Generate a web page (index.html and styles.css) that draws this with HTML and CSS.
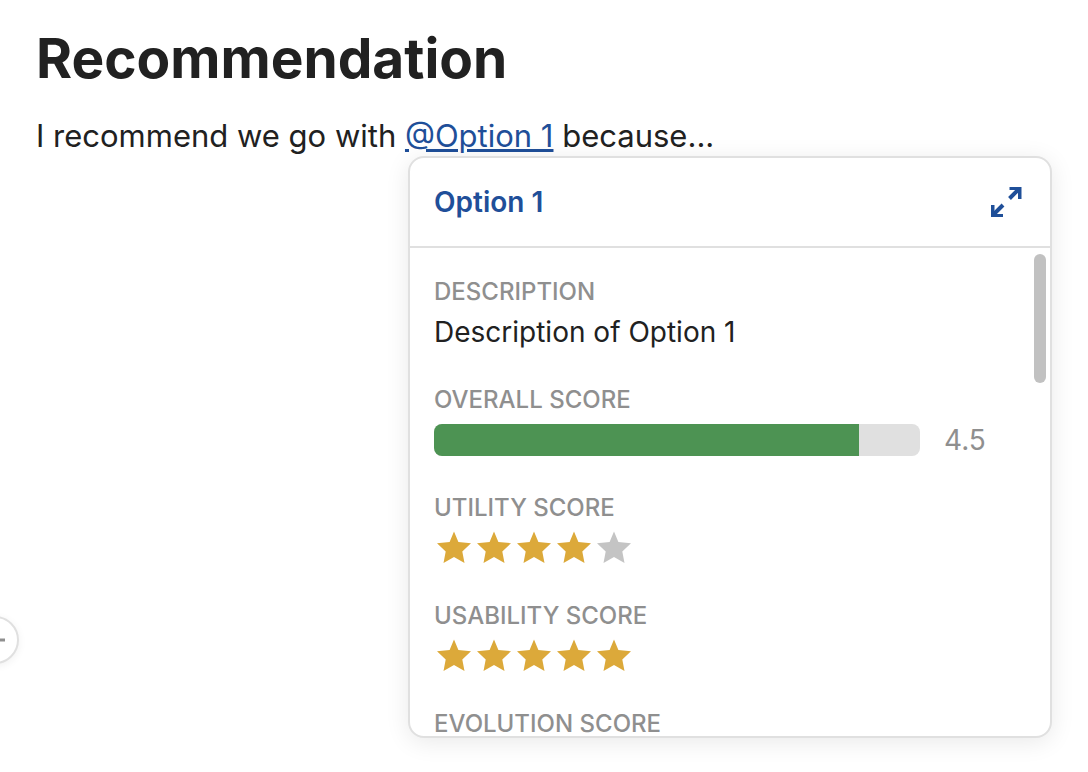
FILE: index.html
```html
<!DOCTYPE html>
<html lang="en">
<head>
<meta charset="utf-8">
<title>Recommendation</title>
<link rel="stylesheet" href="styles.css">
</head>
<body>
<svg class="symbols" aria-hidden="true">
  <symbol id="star" viewBox="0 0 40 40"><path d="M20 3.5L24.4 14 37 15.2 28.3 23.5 30.5 35 20 29 9.5 35 11.7 23.5 3 15.2 15.6 14z"/></symbol>
</svg>
<main class="document">
  <h1 class="title">Recommendation</h1>
  <p class="paragraph">I recommend we go with <a class="mention-link" href="#option-1">@Option 1</a> because...</p>
  <section class="card" id="option-1" aria-labelledby="card-title">
    <header class="card-header">
      <h2 class="card-title" id="card-title">Option 1</h2>
      <button class="expand" type="button" aria-label="Expand">
        <svg class="expand-icon" viewBox="0 0 32 32" aria-hidden="true"><path class="arrow" d="M19.5 12.5L29 3M13 19L3 29"/><path d="M19.5 1H31.5V13H28V4H19.5zM1 19H4.500V28H13V31H1z"/></svg>
      </button>
    </header>
    <div class="card-body">
      <dl class="fields">
        <div class="field"><dt class="label">DESCRIPTION</dt><dd class="value">Description of Option 1</dd></div>
        <div class="field"><dt class="label">OVERALL SCORE</dt><dd class="value score"><span class="track"><span class="fill"></span></span><span class="score-number">4.5</span></dd></div>
        <div class="field"><dt class="label">UTILITY SCORE</dt><dd class="value stars" aria-label="4 of 5">
          <svg class="star"><use href="#star"/></svg><svg class="star"><use href="#star"/></svg><svg class="star"><use href="#star"/></svg><svg class="star"><use href="#star"/></svg><svg class="star star-off"><use href="#star"/></svg></dd></div>
        <div class="field"><dt class="label">USABILITY SCORE</dt><dd class="value stars" aria-label="5 of 5">
          <svg class="star"><use href="#star"/></svg><svg class="star"><use href="#star"/></svg><svg class="star"><use href="#star"/></svg><svg class="star"><use href="#star"/></svg><svg class="star"><use href="#star"/></svg></dd></div>
        <div class="field"><dt class="label">EVOLUTION SCORE</dt></div>
      </dl>
      <span class="scroll-thumb"></span>
    </div>
  </section>
</main>
<button class="add" type="button" aria-label="Add"><svg class="add-icon" viewBox="0 0 20 20" aria-hidden="true"><path d="M0 10H20M10 0V20"/></svg></button>
</body>
</html>
```
FILE: styles.css
```css
* { box-sizing: border-box; }
body {
  margin: 0;
  background: #fff;
  color: #212121;
  font-family: Inter, "Liberation Sans", sans-serif;
}
.symbols { display: none; }
.document { position: relative; min-height: 100vh; padding: 24px 36px; }
.title { margin: 0 0 24px; font-size: 55px; line-height: 68px; font-weight: 700; }
.paragraph { margin: 0; font-size: 31px; line-height: 40px; }
.mention-link {
  color: #1f4f99;
  text-decoration-thickness: 3px;
  text-underline-offset: 2px;
}
.card {
  position: absolute;
  top: 156px;
  left: 408px;
  display: flex;
  flex-direction: column;
  width: 644px;
  max-height: 582px;
  overflow: hidden;
  background: #fff;
  border: 2px solid #e0e0e0;
  border-radius: 16px;
  box-shadow: 0 4px 24px rgba(0, 0, 0, 0.09);
}
.card-header {
  display: flex;
  flex: none;
  align-items: center;
  justify-content: space-between;
  padding: 24px;
  border-bottom: 2px solid #e0e0e0;
}
.card-title { margin: 0; font-size: 28px; line-height: 40px; font-weight: 600; color: #1f4f99; }
.expand { display: flex; padding: 4px; border: 0; background: none; color: #1f4f99; }
.expand-icon { width: 32px; height: 32px; fill: currentColor; }
.arrow { fill: none; stroke: currentColor; stroke-width: 4; }
.card-body { position: relative; overflow: hidden; }
.fields { display: flex; flex-direction: column; gap: 28px; margin: 0; padding: 24px; }
.label { font-size: 24px; line-height: 40px; font-weight: 500; color: #8f8f8f; }
.value { margin: 0; height: 40px; font-size: 28px; line-height: 40px; }
.score { display: flex; align-items: center; gap: 24px; }
.track { flex: 1; height: 32px; overflow: hidden; border-radius: 8px; background: #e0e0e0; }
.fill { display: block; width: 87.5%; height: 100%; background: #4d9353; }
.score-number { width: 82px; color: #8f8f8f; }
.stars { display: flex; }
.star { width: 40px; height: 40px; fill: #dca93a; }
.star-off { fill: #c4c4c4; }
.scroll-thumb {
  position: absolute;
  top: 6px;
  right: 4px;
  width: 12px;
  height: 129px;
  border-radius: 6px;
  background: #c1c1c1;
}
.add {
  position: absolute;
  top: 616px;
  left: -29px;
  display: flex;
  align-items: center;
  justify-content: center;
  width: 48px;
  height: 48px;
  padding: 0;
  border: 2px solid #e0e0e0;
  border-radius: 50%;
  background: #fff;
  box-shadow: 0 2px 8px rgba(0, 0, 0, 0.06);
}
.add-icon { width: 20px; height: 20px; stroke: #8f8f8f; stroke-width: 3; }
```
